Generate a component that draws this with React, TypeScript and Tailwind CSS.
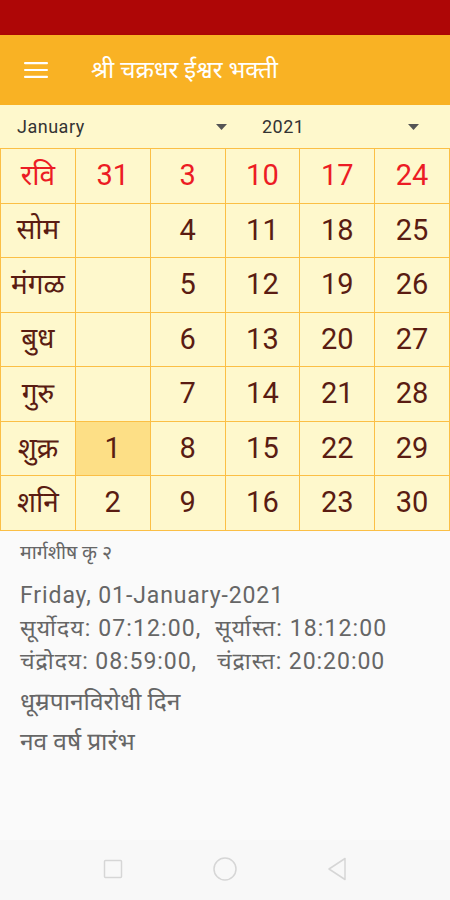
const ROWS: { day: string; red?: boolean; cells: (number | null)[] }[] = [
  { day: 'रवि', red: true, cells: [31, 3, 10, 17, 24] },
  { day: 'सोम', cells: [null, 4, 11, 18, 25] },
  { day: 'मंगळ', cells: [null, 5, 12, 19, 26] },
  { day: 'बुध', cells: [null, 6, 13, 20, 27] },
  { day: 'गुरु', cells: [null, 7, 14, 21, 28] },
  { day: 'शुक्र', cells: [1, 8, 15, 22, 29] },
  { day: 'शनि', cells: [2, 9, 16, 23, 30] },
]

const FONT = "font-['Roboto','Noto_Sans_Devanagari','Noto_Sans',sans-serif]"

function Caret() {
  return (
    <svg width="11" height="6" viewBox="0 0 11 6" className="text-[#555]">
      <path d="M0 0h11L5.5 6z" fill="currentColor" />
    </svg>
  )
}

export default function App() {
  return (
    <div className={`flex h-[900px] w-[450px] flex-col bg-[#fafafa] ${FONT}`}>
      <div className="h-[35px] bg-[#ae0606]" />
      <header className="flex h-[70px] items-center bg-[#f9b224] shadow-sm">
        <svg width="24" height="16" viewBox="0 0 24 16" className="ml-6 text-white">
          <rect y="0" width="24" height="2.2" rx="1" fill="currentColor" />
          <rect y="6.9" width="24" height="2.2" rx="1" fill="currentColor" />
          <rect y="13.8" width="24" height="2.2" rx="1" fill="currentColor" />
        </svg>
        <h1 className="ml-[43px] text-[24px] text-white">श्री चक्रधर ईश्वर भक्ती</h1>
      </header>

      <div className="flex h-[43px] items-center bg-[#fef8cc] text-[18px] tracking-[0.5px] text-[#333]">
        <div className="flex w-[237px] items-center justify-between pl-[17px] pr-[10px]">
          <span>January</span>
          <Caret />
        </div>
        <div className="flex flex-1 items-center justify-between pl-[25px] pr-[31px]">
          <span>2021</span>
          <Caret />
        </div>
      </div>

      <div className="grid h-[383px] grid-cols-6 grid-rows-7 border-l border-t border-[#fbbf45] bg-[#fef8cc]">
        {ROWS.map((r) => (
          <>
            <div
              key={r.day}
              className={`flex items-center justify-center border-b border-r border-[#fbbf45] text-[28px] ${
                r.red ? 'text-[#ec1c24]' : 'text-[#5a1c12]'
              }`}
            >
              {r.day}
            </div>
            {r.cells.map((c, i) => (
              <div
                key={r.day + i}
                className={`flex items-center justify-center border-b border-r border-[#fbbf45] text-[29px] ${
                  r.red ? 'text-[#ec1c24]' : 'text-[#5a1c12]'
                } ${c === 1 ? 'bg-[#fddf86]' : ''}`}
              >
                {c ?? ''}
              </div>
            ))}
          </>
        ))}
      </div>

      <div className="flex flex-1 flex-col px-[20px] pt-[8px] text-[#666]">
        <p className="text-[19.5px] leading-[28px]">मार्गशीष कृ २</p>
        <p className="mt-[12px] text-[23px] leading-[33px] tracking-[0.9px]">Friday, 01-January-2021</p>
        <p className="text-[23px] leading-[33px] tracking-[1.1px] whitespace-pre">सूर्योदय: 07:12:00,  सूर्यास्त: 18:12:00</p>
        <p className="text-[23px] leading-[33px] tracking-[0.95px] whitespace-pre">चंद्रोदय: 08:59:00,   चंद्रास्त: 20:20:00</p>
        <p className="mt-[7px] text-[24.5px] leading-[33px]">धूम्रपानविरोधी दिन</p>
        <p className="mt-[7px] text-[24.5px] leading-[33px]">नव वर्ष प्रारंभ</p>
      </div>

      <nav className="flex h-[60px] items-center justify-center gap-[90px] bg-[#f8f8f8] pb-[2px]">
        <svg width="20" height="20" viewBox="0 0 20 20">
          <rect x="1.5" y="1.5" width="17" height="17" rx="1" fill="none" stroke="#d6d6d6" strokeWidth="1.5" />
        </svg>
        <svg width="24" height="24" viewBox="0 0 24 24">
          <circle cx="12" cy="12" r="11" fill="none" stroke="#d6d6d6" strokeWidth="1.5" />
        </svg>
        <svg width="20" height="24" viewBox="0 0 20 24">
          <path d="M18 1.5v21L2 12z" fill="none" stroke="#d6d6d6" strokeWidth="1.5" strokeLinejoin="round" />
        </svg>
      </nav>
    </div>
  )
}
